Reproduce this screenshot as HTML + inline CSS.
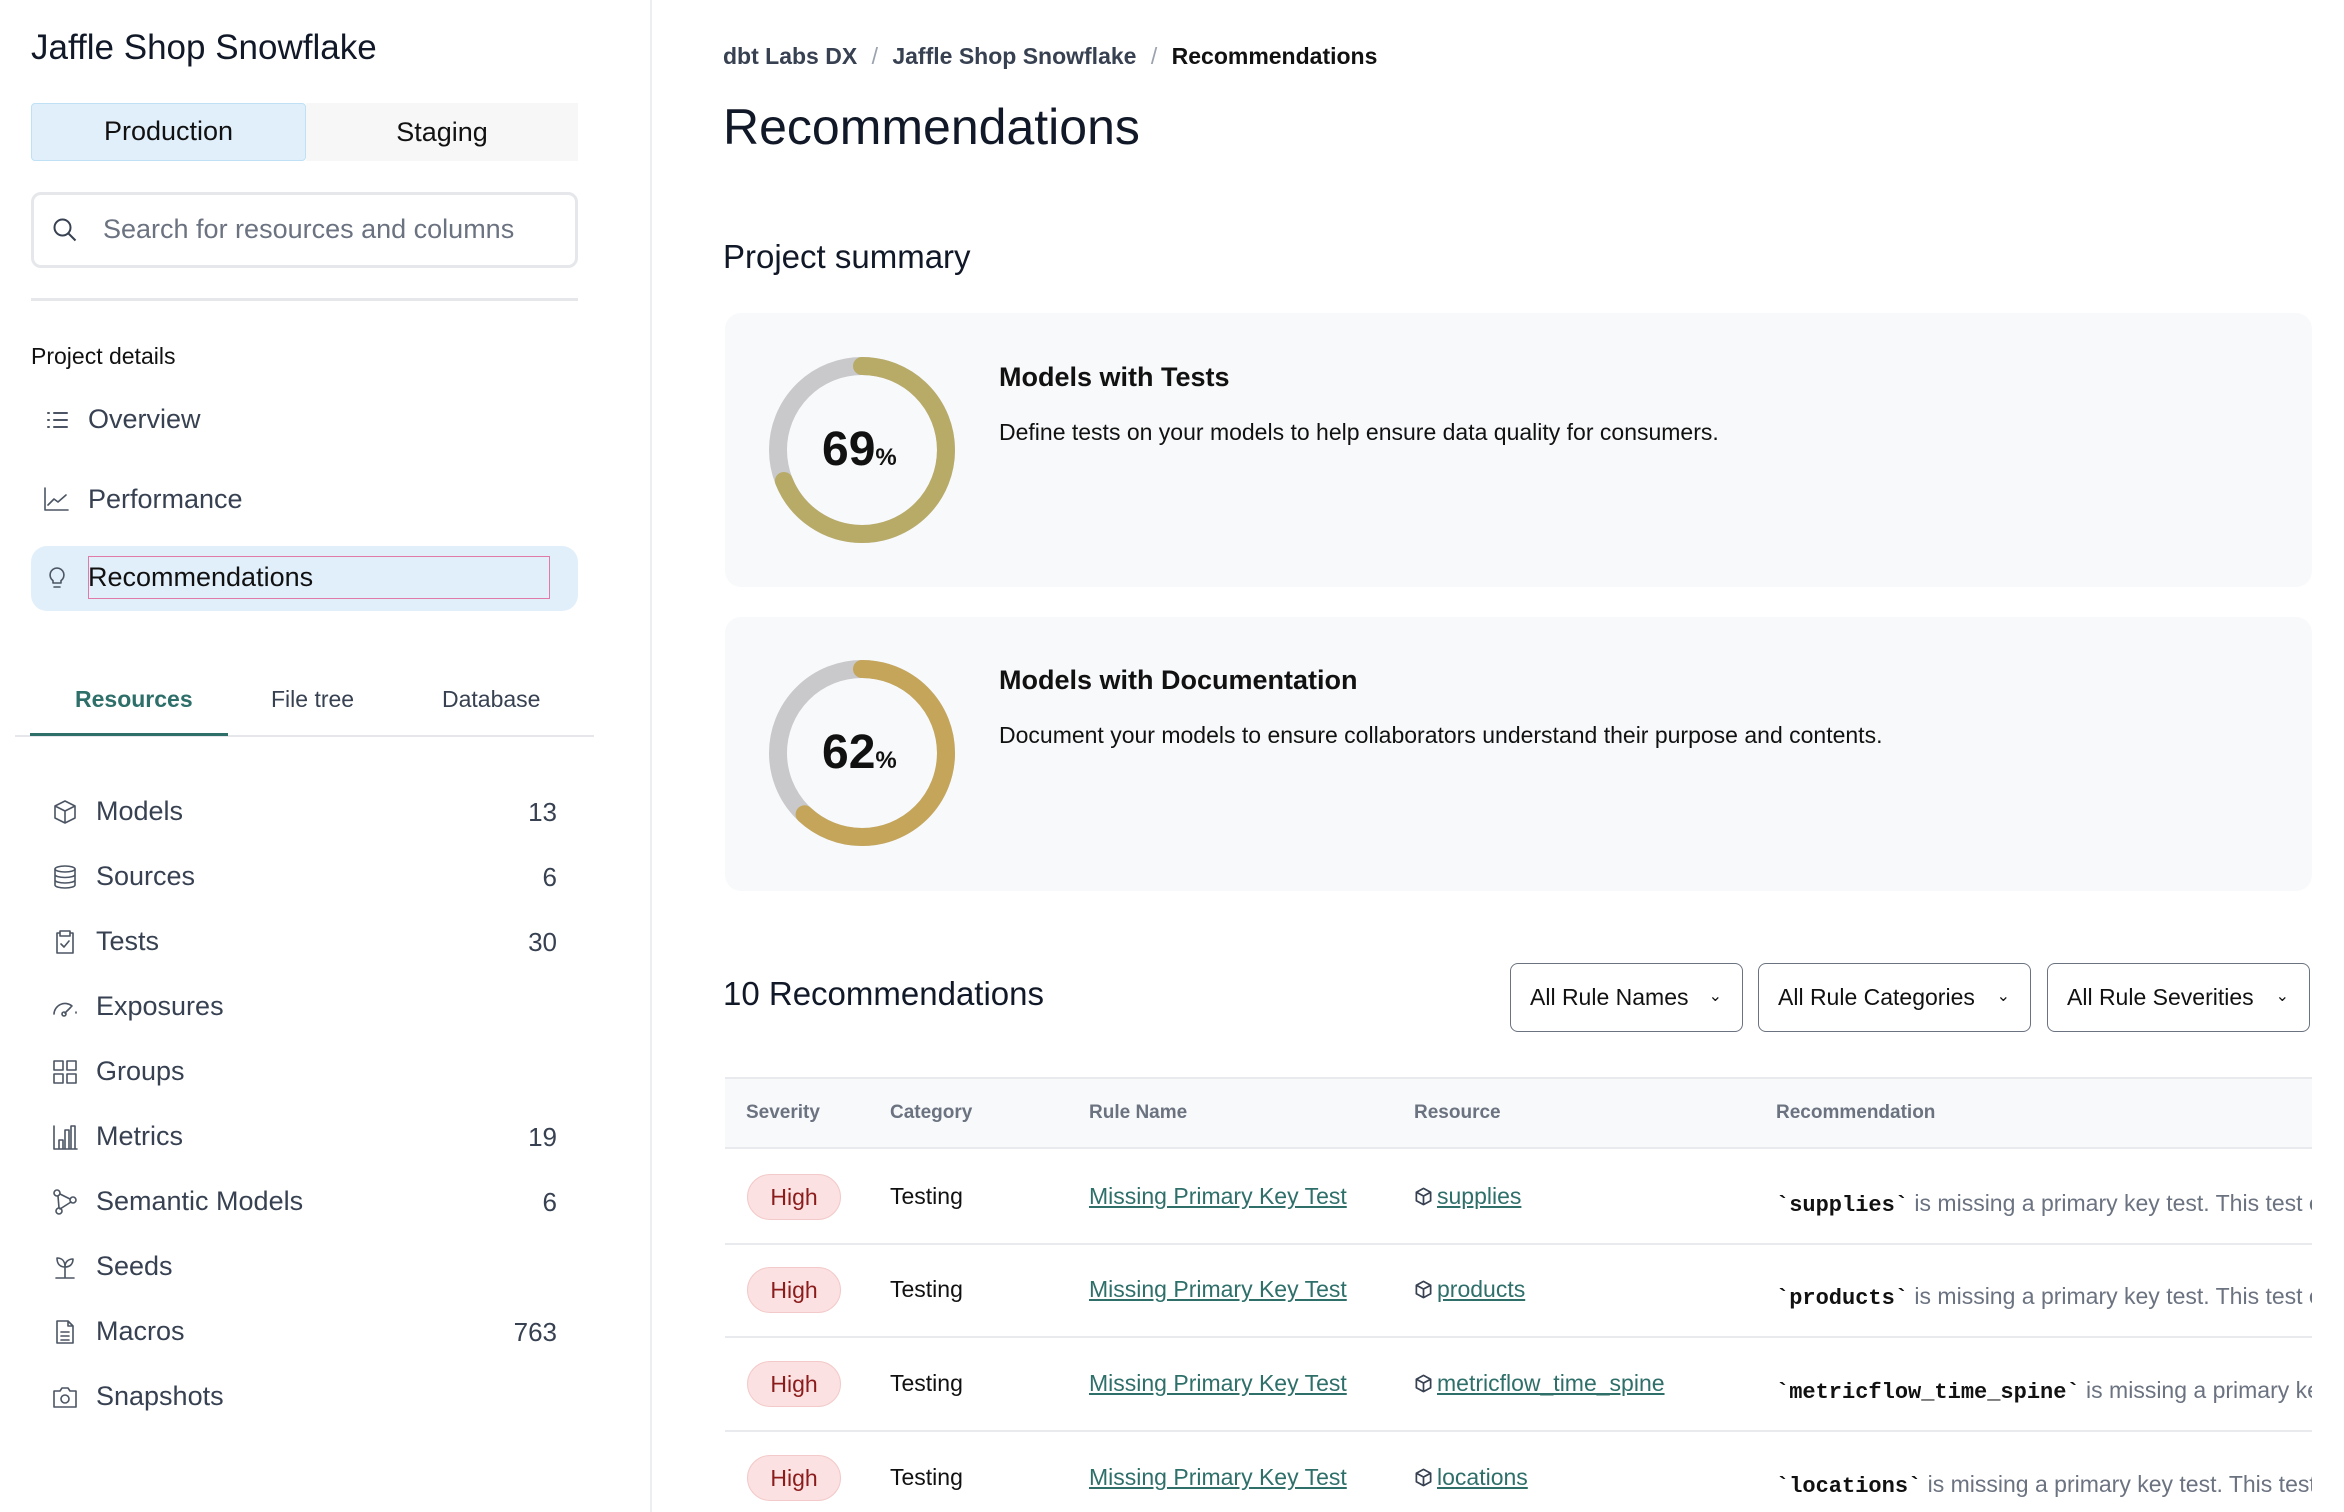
<!DOCTYPE html>
<html><head><meta charset="utf-8">
<style>
*{margin:0;padding:0;box-sizing:border-box}
body{width:2344px;height:1512px;overflow:hidden;background:#fff;font-family:"Liberation Sans",sans-serif;color:#1f2937;position:relative}
.a{position:absolute;white-space:nowrap}
.side{position:absolute;left:0;top:0;width:652px;height:1512px;border-right:2px solid #eceef1}
.ico{position:absolute;width:26px;height:26px}
.ico svg{width:26px;height:26px;fill:none;stroke:#4b5563;stroke-width:1.6;stroke-linecap:round;stroke-linejoin:round}
.ri{font-size:27px;color:#374151}
.num{font-size:26px;color:#374151;text-align:right;width:100px}
.card{position:absolute;left:725px;width:1587px;height:274px;background:#f8f9fa;border-radius:16px}
.th{font-size:19px;color:#6b7280;font-weight:bold}
.td{font-size:23px;color:#111}
.pill{position:absolute;left:747px;width:94px;height:46px;border-radius:23px;background:#fbe1e1;border:1px solid #f3c9c9;color:#8b1c1c;font-size:23px;text-align:center;line-height:44px}
.lnk{font-size:23px;color:#2f6f6a;text-decoration:underline}
.lnk svg{width:19px;height:19px;fill:none;stroke:#374151;stroke-width:1.8;stroke-linejoin:round;vertical-align:-2px;margin-right:4px}
.rec{font-size:23px;color:#6b7280}
.rec b{font-family:"Liberation Mono",monospace;color:#111;font-size:22px}
.dd{position:absolute;top:963px;height:69px;border:1.5px solid #6b7280;border-radius:8px;font-size:23px;line-height:66px;padding-left:19px;color:#111}
.dd span{position:absolute;right:20px;top:0;font-size:16px}
.hr{position:absolute;left:725px;width:1587px;height:2px;background:#e8eaed}
</style></head><body>
<div class="side">
<div class="a" style="left:31px;top:28px;font-size:35px;color:#111827">Jaffle Shop Snowflake</div>
<div class="a" style="left:31px;top:103px;width:275px;height:58px;background:#e1effb;border:1.5px solid #bfe0f5;border-radius:4px;font-size:27px;text-align:center;line-height:55px;color:#111">Production</div>
<div class="a" style="left:306px;top:103px;width:272px;height:58px;background:#f7f7f7;font-size:27px;text-align:center;line-height:58px;color:#111">Staging</div>
<div class="a" style="left:31px;top:192px;width:547px;height:76px;border:3px solid #e5e7eb;border-radius:10px"></div>
<svg class="a" style="left:52px;top:217px" width="26" height="26" viewBox="0 0 26 26" fill="none" stroke="#374151" stroke-width="2"><circle cx="10.5" cy="10.5" r="8"/><path d="M16.5 16.5l7 7"/></svg>
<div class="a" style="left:103px;top:214px;font-size:27px;color:#6b7280">Search for resources and columns</div>
<div class="a" style="left:31px;top:298px;width:547px;height:3px;background:#e5e7eb"></div>
<div class="a" style="left:31px;top:343px;font-size:23px;color:#111">Project details</div>
<div class="ico" style="left:44px;top:407px"><svg viewBox="0 0 26 26"><path d="M4 6h1M4 13h1M4 20h1M10 6h13M10 13h13M10 20h13" stroke-width="2"/></svg></div>
<div class="a ri" style="left:88px;top:404px">Overview</div>
<div class="ico" style="left:43px;top:486px"><svg viewBox="0 0 26 26"><path d="M2 2v22h23M5 19l6-6 4 3 8-7"/></svg></div>
<div class="a ri" style="left:88px;top:484px">Performance</div>
<div class="a" style="left:31px;top:546px;width:547px;height:65px;background:#e1effb;border-radius:16px"></div>
<div class="a" style="left:88px;top:556px;width:462px;height:43px;border:1.5px solid #e07aa8"></div>
<div class="ico" style="left:44px;top:565px"><svg viewBox="0 0 26 26"><path d="M13 3a7 7 0 0 0-4 12.7V18h8v-2.3A7 7 0 0 0 13 3zM10 22h6"/></svg></div>
<div class="a" style="left:88px;top:562px;font-size:27px;color:#111">Recommendations</div>
<div class="a" style="left:75px;top:686px;font-size:23px;color:#2f6f6a;font-weight:bold">Resources</div>
<div class="a" style="left:271px;top:686px;font-size:23px;color:#374151">File tree</div>
<div class="a" style="left:442px;top:686px;font-size:23px;color:#374151">Database</div>
<div class="a" style="left:15px;top:735px;width:579px;height:1.5px;background:#e5e7eb"></div>
<div class="a" style="left:30px;top:733px;width:198px;height:3px;background:#2f6f6a"></div>

<div class="ico" style="left:52px;top:799px"><svg viewBox="0 0 26 26"><path d="M13 2l10 5v12l-10 5-10-5V7zM3 7l10 5 10-5M13 12v12"/></svg></div>
<div class="a ri" style="left:96px;top:796px">Models</div><div class="a num" style="left:457px;top:797px">13</div>
<div class="ico" style="left:52px;top:864px"><svg viewBox="0 0 26 26"><ellipse cx="13" cy="5" rx="10" ry="3"/><path d="M3 5v16c0 1.7 4.5 3 10 3s10-1.3 10-3V5M3 10.5c0 1.7 4.5 3 10 3s10-1.3 10-3M3 16c0 1.7 4.5 3 10 3s10-1.3 10-3"/></svg></div>
<div class="a ri" style="left:96px;top:861px">Sources</div><div class="a num" style="left:457px;top:862px">6</div>
<div class="ico" style="left:52px;top:929px"><svg viewBox="0 0 26 26"><path d="M8 4H5v20h16V4h-3M8 2h10v5H8zM9 15l3 3 5-6"/></svg></div>
<div class="a ri" style="left:96px;top:926px">Tests</div><div class="a num" style="left:457px;top:927px">30</div>
<div class="ico" style="left:52px;top:994px"><svg viewBox="0 0 26 26"><path d="M2 20a11 11 0 0 1 18-8M24 18v1M13 19l6-6"/><circle cx="12" cy="20" r="2"/></svg></div>
<div class="a ri" style="left:96px;top:991px">Exposures</div>
<div class="ico" style="left:52px;top:1059px"><svg viewBox="0 0 26 26"><rect x="2" y="2" width="9" height="9"/><rect x="15" y="2" width="9" height="9"/><rect x="2" y="15" width="9" height="9"/><rect x="15" y="15" width="9" height="9"/></svg></div>
<div class="a ri" style="left:96px;top:1056px">Groups</div>
<div class="ico" style="left:52px;top:1124px"><svg viewBox="0 0 26 26"><path d="M2 2v23h23M7 24v-8h4v8M13 24V6h4v18M19 24V2h4v22"/></svg></div>
<div class="a ri" style="left:96px;top:1121px">Metrics</div><div class="a num" style="left:457px;top:1122px">19</div>
<div class="ico" style="left:52px;top:1189px"><svg viewBox="0 0 26 26"><circle cx="5" cy="4" r="3"/><circle cx="21" cy="11" r="3"/><circle cx="7" cy="22" r="3"/><path d="M6 7l1 12M8 20l11-7M8 5l10 5"/></svg></div>
<div class="a ri" style="left:96px;top:1186px">Semantic Models</div><div class="a num" style="left:457px;top:1187px">6</div>
<div class="ico" style="left:52px;top:1254px"><svg viewBox="0 0 26 26"><path d="M13 24V13M13 13C8 13 5 10 5 4c5 0 8 3 8 9zM13 13c0-5 3-8 8-8 0 5-3 8-8 8M4 24h18"/></svg></div>
<div class="a ri" style="left:96px;top:1251px">Seeds</div>
<div class="ico" style="left:52px;top:1319px"><svg viewBox="0 0 26 26"><path d="M5 2h11l5 5v17H5zM16 2v5h5M9 13h8M9 17h8M9 21h8"/></svg></div>
<div class="a ri" style="left:96px;top:1316px">Macros</div><div class="a num" style="left:457px;top:1317px">763</div>
<div class="ico" style="left:52px;top:1384px"><svg viewBox="0 0 26 26"><path d="M2 7h6l2-3h6l2 3h6v16H2z"/><circle cx="13" cy="15" r="4"/></svg></div>
<div class="a ri" style="left:96px;top:1381px">Snapshots</div>
</div>

<div class="a" style="left:723px;top:43px;font-size:23px;font-weight:bold;color:#374151">dbt Labs DX <span style="color:#9ca3af;font-weight:normal;margin:0 8px">/</span> Jaffle Shop Snowflake <span style="color:#9ca3af;font-weight:normal;margin:0 8px">/</span> <span style="color:#111">Recommendations</span></div>
<div class="a" style="left:723px;top:98px;font-size:50px;color:#111827">Recommendations</div>
<div class="a" style="left:723px;top:238px;font-size:33px;color:#111827">Project summary</div>

<div class="card" style="top:313px"></div>
<svg class="a" style="left:769px;top:357px" width="186" height="186" viewBox="0 0 186 186"><circle cx="93" cy="93" r="84" fill="none" stroke="#c9c9cc" stroke-width="18"/><circle cx="93" cy="93" r="84" fill="none" stroke="#b8ab68" stroke-width="18" stroke-dasharray="364 600" stroke-linecap="round" transform="rotate(-90 93 93)"/></svg>
<div class="a" style="left:822px;top:422px;font-size:48px;font-weight:bold;color:#111">69<span style="font-size:24px">%</span></div>
<div class="a" style="left:999px;top:362px;font-size:27px;font-weight:bold;color:#111">Models with Tests</div>
<div class="a" style="left:999px;top:419px;font-size:23px;color:#111">Define tests on your models to help ensure data quality for consumers.</div>

<div class="card" style="top:617px"></div>
<svg class="a" style="left:769px;top:660px" width="186" height="186" viewBox="0 0 186 186"><circle cx="93" cy="93" r="84" fill="none" stroke="#c9c9cc" stroke-width="18"/><circle cx="93" cy="93" r="84" fill="none" stroke="#c4a55a" stroke-width="18" stroke-dasharray="327 600" stroke-linecap="round" transform="rotate(-90 93 93)"/></svg>
<div class="a" style="left:822px;top:725px;font-size:48px;font-weight:bold;color:#111">62<span style="font-size:24px">%</span></div>
<div class="a" style="left:999px;top:665px;font-size:27px;font-weight:bold;color:#111">Models with Documentation</div>
<div class="a" style="left:999px;top:722px;font-size:23px;color:#111">Document your models to ensure collaborators understand their purpose and contents.</div>

<div class="a" style="left:723px;top:975px;font-size:33px;color:#111827">10 Recommendations</div>
<div class="dd" style="left:1510px;width:233px">All Rule Names<span>&#8964;</span></div>
<div class="dd" style="left:1758px;width:273px">All Rule Categories<span>&#8964;</span></div>
<div class="dd" style="left:2047px;width:263px">All Rule Severities<span>&#8964;</span></div>

<div class="a" style="left:725px;top:1077px;width:1587px;height:72px;background:#f8f9fa;border-top:2px solid #e8eaed;border-bottom:2px solid #e8eaed"></div>
<div class="a th" style="left:746px;top:1102px">Severity</div>
<div class="a th" style="left:890px;top:1102px">Category</div>
<div class="a th" style="left:1089px;top:1102px">Rule Name</div>
<div class="a th" style="left:1414px;top:1102px">Resource</div>
<div class="a th" style="left:1776px;top:1102px">Recommendation</div>

<div class="hr" style="top:1243px"></div>
<div class="hr" style="top:1336px"></div>
<div class="hr" style="top:1430px"></div>

<div style="position:absolute;left:0;top:0;width:2312px;height:1512px;overflow:hidden">
<div class="pill" style="top:1174px">High</div>
<div class="a td" style="left:890px;top:1183px">Testing</div>
<div class="a lnk" style="left:1089px;top:1183px">Missing Primary Key Test</div>
<div class="a lnk" style="left:1414px;top:1183px"><svg viewBox="0 0 20 20"><path d="M10 1.5l7.5 4v9l-7.5 4-7.5-4v-9zM2.5 5.5l7.5 4 7.5-4M10 9.5v9"/></svg>supplies</div>
<div class="a rec" style="left:1776px;top:1190px"><b>`supplies`</b> is missing a primary key test. This test ensures</div>

<div class="pill" style="top:1267px">High</div>
<div class="a td" style="left:890px;top:1276px">Testing</div>
<div class="a lnk" style="left:1089px;top:1276px">Missing Primary Key Test</div>
<div class="a lnk" style="left:1414px;top:1276px"><svg viewBox="0 0 20 20"><path d="M10 1.5l7.5 4v9l-7.5 4-7.5-4v-9zM2.5 5.5l7.5 4 7.5-4M10 9.5v9"/></svg>products</div>
<div class="a rec" style="left:1776px;top:1283px"><b>`products`</b> is missing a primary key test. This test ensures</div>

<div class="pill" style="top:1361px">High</div>
<div class="a td" style="left:890px;top:1370px">Testing</div>
<div class="a lnk" style="left:1089px;top:1370px">Missing Primary Key Test</div>
<div class="a lnk" style="left:1414px;top:1370px"><svg viewBox="0 0 20 20"><path d="M10 1.5l7.5 4v9l-7.5 4-7.5-4v-9zM2.5 5.5l7.5 4 7.5-4M10 9.5v9"/></svg>metricflow_time_spine</div>
<div class="a rec" style="left:1776px;top:1377px"><b>`metricflow_time_spine`</b> is missing a primary key test.</div>

<div class="pill" style="top:1455px">High</div>
<div class="a td" style="left:890px;top:1464px">Testing</div>
<div class="a lnk" style="left:1089px;top:1464px">Missing Primary Key Test</div>
<div class="a lnk" style="left:1414px;top:1464px"><svg viewBox="0 0 20 20"><path d="M10 1.5l7.5 4v9l-7.5 4-7.5-4v-9zM2.5 5.5l7.5 4 7.5-4M10 9.5v9"/></svg>locations</div>
<div class="a rec" style="left:1776px;top:1471px"><b>`locations`</b> is missing a primary key test. This test ensures</div>
</div>
</body></html>
